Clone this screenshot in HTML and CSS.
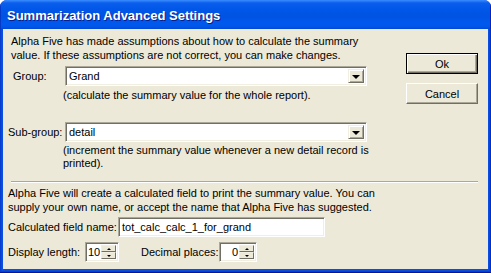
FILE: index.html
```html
<!DOCTYPE html>
<html lang="en">

<head>
    <meta charset="UTF-8">
    <meta name="viewport" content="width=device-width, initial-scale=1.0">
    <title>Summarization Advanced Settings</title>
    <link rel="stylesheet" href="styles.css">
</head>

<body>

    <div class="window">
        <div class="titlebar">Summarization Advanced Settings</div>
        <div class="frame">
            <div class="client">

                <div class="top">
                    <div class="fields">
                        <p class="intro">Alpha Five has made assumptions about how to calculate the summary<br>value. If these assumptions are not correct, you can make changes.</p>

                        <div class="row group-row">
                            <label class="label label-group">Group:</label>
                            <div class="combo">
                                <span class="combo-value">Grand</span>
                                <span class="drop-btn"><span class="arrow"></span></span>
                            </div>
                        </div>
                        <p class="hint">(calculate the summary value for the whole report).</p>

                        <div class="row sub-row">
                            <label class="label">Sub-group:</label>
                            <div class="combo">
                                <span class="combo-value">detail</span>
                                <span class="drop-btn"><span class="arrow"></span></span>
                            </div>
                        </div>
                        <p class="hint hint-two">(increment the summary value whenever a new detail record is<br>printed).</p>
                    </div>

                    <div class="buttons">
                        <button class="btn btn-default">Ok</button>
                        <button class="btn">Cancel</button>
                    </div>
                </div>

                <div class="separator"></div>

                <p class="intro intro-second">Alpha Five will create a calculated field to print the summary value. You can<br>supply your own name, or accept the name that Alpha Five has suggested.</p>

                <div class="row calc-row">
                    <label class="label label-calc">Calculated field name:</label>
                    <div class="textbox">tot_calc_calc_1_for_grand</div>
                </div>

                <div class="row display-row">
                    <label class="label label-length">Display length:</label>
                    <div class="spinner spinner-length">
                        <span class="spin-value">10</span>
                        <span class="spin-btns">
                            <span class="spin-btn"><span class="up"></span></span>
                            <span class="spin-btn"><span class="down"></span></span>
                        </span>
                    </div>
                    <label class="label label-decimal">Decimal places:</label>
                    <div class="spinner spinner-decimal">
                        <span class="spin-value">0</span>
                        <span class="spin-btns">
                            <span class="spin-btn"><span class="up"></span></span>
                            <span class="spin-btn"><span class="down"></span></span>
                        </span>
                    </div>
                </div>

            </div>
        </div>
    </div>

</body>

</html>
```

FILE: styles.css
```css
body {
    margin: 0;
    background-color: #fff;
    font-family: "Liberation Sans", Arial, sans-serif;
    font-size: 11px;
    color: #000;
}

.window {
    width: 491px;
    height: 273px;
    display: flex;
    flex-direction: column;
    border-radius: 7px 7px 0 0;
    overflow: hidden;
    background-color: #0842d8;
}

.titlebar {
    height: 29px;
    flex: none;
    box-sizing: border-box;
    padding: 8px 0 0 7px;
    color: #fff;
    font-family: "Liberation Sans", Arial, sans-serif;
    font-weight: bold;
    font-size: 13px;
    line-height: 15px;
    text-shadow: 1px 1px 0 #0a1e8c;
    background: linear-gradient(to bottom, #3b8dff 0, #0b5eed 3px, #0157e8 9px, #0053e3 16px, #0059ee 24px, #0055e6 27px, #0048d4 29px);
    box-shadow: inset 1px 0 0 #0639c4, inset -1px 0 0 #0025b8;
}

.frame {
    flex: 1;
    display: flex;
    padding: 0 3px 4px 3px;
    background: linear-gradient(to right, #0639c4, #0b4ee2 2px, #0b4ee2 calc(100% - 2px), #0025b8);
    box-shadow: inset 0 -1px 0 #001a96, inset 0 -2px 0 #0a3fce;
}

.client {
    flex: 1;
    box-sizing: border-box;
    padding: 5px 10px 0 5px;
    background-color: #ece9d8;
}

p {
    margin: 0;
}

.top {
    display: flex;
}

.fields {
    width: 362px;
}

.intro {
    line-height: 14px;
    padding-left: 3px;
    white-space: nowrap;
}

.row {
    display: flex;
    align-items: center;
}

.label {
    flex: none;
}

.group-row {
    margin-top: 4px;
}

.label-group {
    width: 52px;
    padding-left: 5px;
}

.sub-row {
    margin-top: 20px;
}

.sub-row .label {
    width: 57px;
}

.hint {
    margin-top: 2px;
    padding-left: 55px;
    line-height: 14px;
    white-space: nowrap;
}

.hint-two {
    line-height: 13px;
}

.combo {
    width: 302px;
    height: 20px;
    box-sizing: border-box;
    display: flex;
    padding: 2px;
    background-color: #fff;
    border: 1px solid;
    border-color: #aca899 #fff #fff #aca899;
    box-shadow: inset 1px 1px 0 #716f64, inset -1px -1px 0 #f1efe2;
}

.combo-value {
    flex: 1;
    line-height: 14px;
    padding-left: 1px;
}

.drop-btn {
    width: 16px;
    display: flex;
    align-items: center;
    justify-content: center;
    box-sizing: border-box;
    background-color: #ece9d8;
    border: 1px solid;
    border-color: #f1efe2 #716f64 #716f64 #f1efe2;
    box-shadow: inset 1px 1px 0 #fff, inset -1px -1px 0 #aca899;
}

.arrow {
    width: 0;
    height: 0;
    border-left: 4px solid transparent;
    border-right: 4px solid transparent;
    border-top: 4px solid #000;
    margin-top: 1px;
}

.buttons {
    margin-left: auto;
    margin-top: 19px;
    display: flex;
    flex-direction: column;
    gap: 9px;
}

.btn {
    width: 72px;
    height: 21px;
    padding: 0;
    font-family: "Liberation Sans", Arial, sans-serif;
    font-size: 11px;
    color: #000;
    background-color: #ece9d8;
    border: 1px solid;
    border-color: #fff #716f64 #716f64 #fff;
    box-shadow: inset -1px -1px 0 #aca899;
}

.btn-default {
    border: 1px solid #000;
    box-shadow: inset 1px 1px 0 #fff, inset -1px -1px 0 #716f64, inset -2px -2px 0 #aca899;
}

.separator {
    margin-top: 11px;
    margin-left: 3px;
    height: 1px;
    border-top: 1px solid #aca899;
    background-color: #fff;
}

.intro-second {
    margin-top: 3px;
    padding-left: 0;
}

.calc-row {
    margin-top: 3px;
}

.label-calc {
    width: 110px;
}

.textbox {
    width: 207px;
    height: 20px;
    box-sizing: border-box;
    padding: 2px 3px;
    line-height: 14px;
    background-color: #fff;
    border: 1px solid;
    border-color: #aca899 #fff #fff #aca899;
    box-shadow: inset 1px 1px 0 #716f64, inset -1px -1px 0 #f1efe2;
}

.display-row {
    margin-top: 5px;
}

.label-length {
    width: 77px;
}

.label-decimal {
    width: 78px;
    margin-left: 22px;
}

.spinner {
    height: 20px;
    box-sizing: border-box;
    display: flex;
    padding: 2px;
    background-color: #fff;
    border: 1px solid;
    border-color: #aca899 #fff #fff #aca899;
    box-shadow: inset 1px 1px 0 #716f64, inset -1px -1px 0 #f1efe2;
}

.spinner-length {
    width: 34px;
}

.spinner-decimal {
    width: 38px;
}

.spin-value {
    flex: 1;
    text-align: right;
    line-height: 14px;
    padding-right: 1px;
}

.spin-btns {
    width: 15px;
    display: flex;
    flex-direction: column;
}

.spin-btn {
    flex: 1;
    display: flex;
    align-items: center;
    justify-content: center;
    box-sizing: border-box;
    background-color: #ece9d8;
    border: 1px solid;
    border-color: #f1efe2 #716f64 #716f64 #f1efe2;
}

.up,
.down {
    width: 0;
    height: 0;
    border-left: 2px solid transparent;
    border-right: 2px solid transparent;
}

.up {
    border-bottom: 2px solid #000;
}

.down {
    border-top: 2px solid #000;
}
```
